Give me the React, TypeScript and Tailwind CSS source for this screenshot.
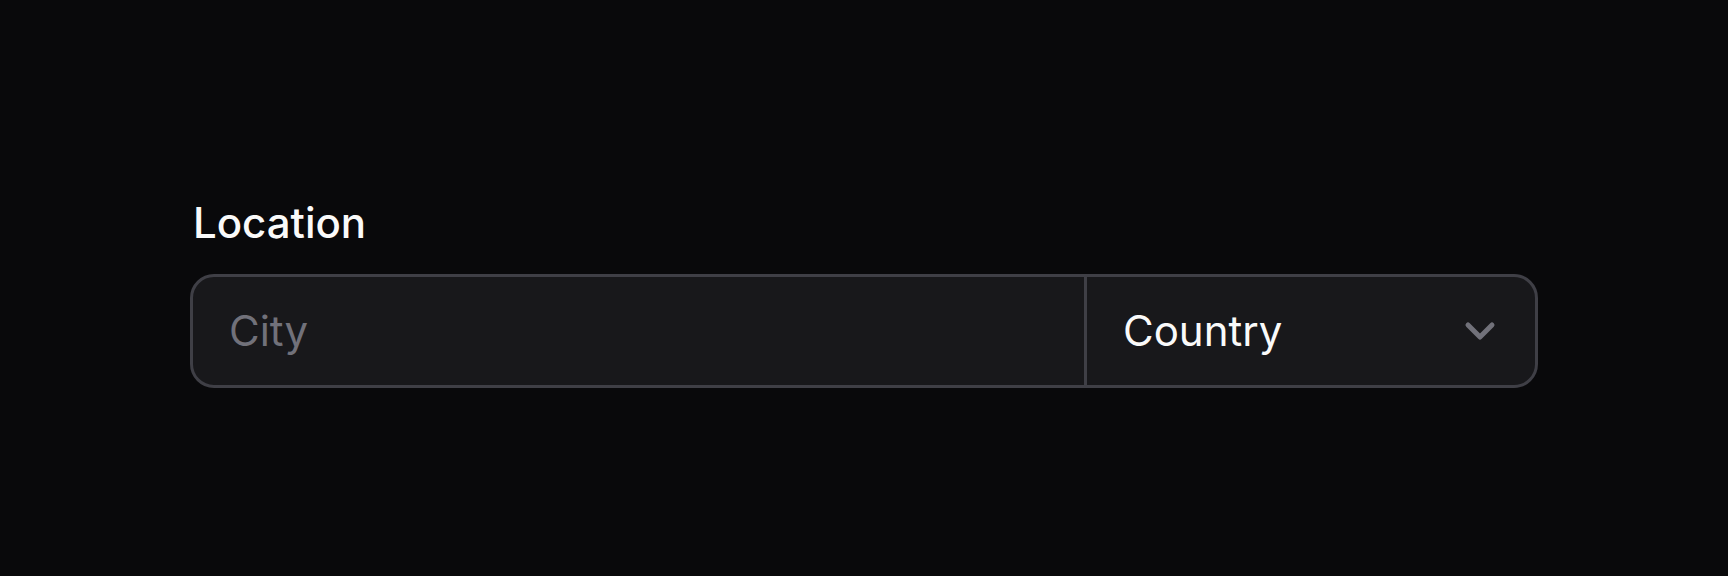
import { ChevronDown } from 'lucide-react';

export default function App() {
  return (
    <div
      className="h-[576px] w-full bg-[#09090b] flex items-center justify-center"
      style={{ fontFamily: 'Inter, "Noto Sans", sans-serif' }}
    >
      <div className="w-[1348px] flex flex-col gap-[21px] mt-[4px]">
        <label className="text-[42px] leading-[60px] font-medium text-[#fafafa] pl-[3px]">
          Location
        </label>
        <div className="flex h-[114px] rounded-[24px] border-[3px] border-[#3f3f46] bg-[#18181b] overflow-hidden">
          <input
            type="text"
            placeholder="City"
            className="flex-1 min-w-0 bg-transparent px-[36px] text-[42px] text-[#fafafa] placeholder:text-[#71717a] outline-none"
          />
          <button
            type="button"
            className="w-[451px] flex items-center justify-between border-l-[3px] border-[#3f3f46] pl-[36px] pr-[31px] text-[42px] text-[#fafafa]"
          >
            <span>Country</span>
            <ChevronDown size={48} strokeWidth={2.5} className="text-[#71717a]" />
          </button>
        </div>
      </div>
    </div>
  );
}
